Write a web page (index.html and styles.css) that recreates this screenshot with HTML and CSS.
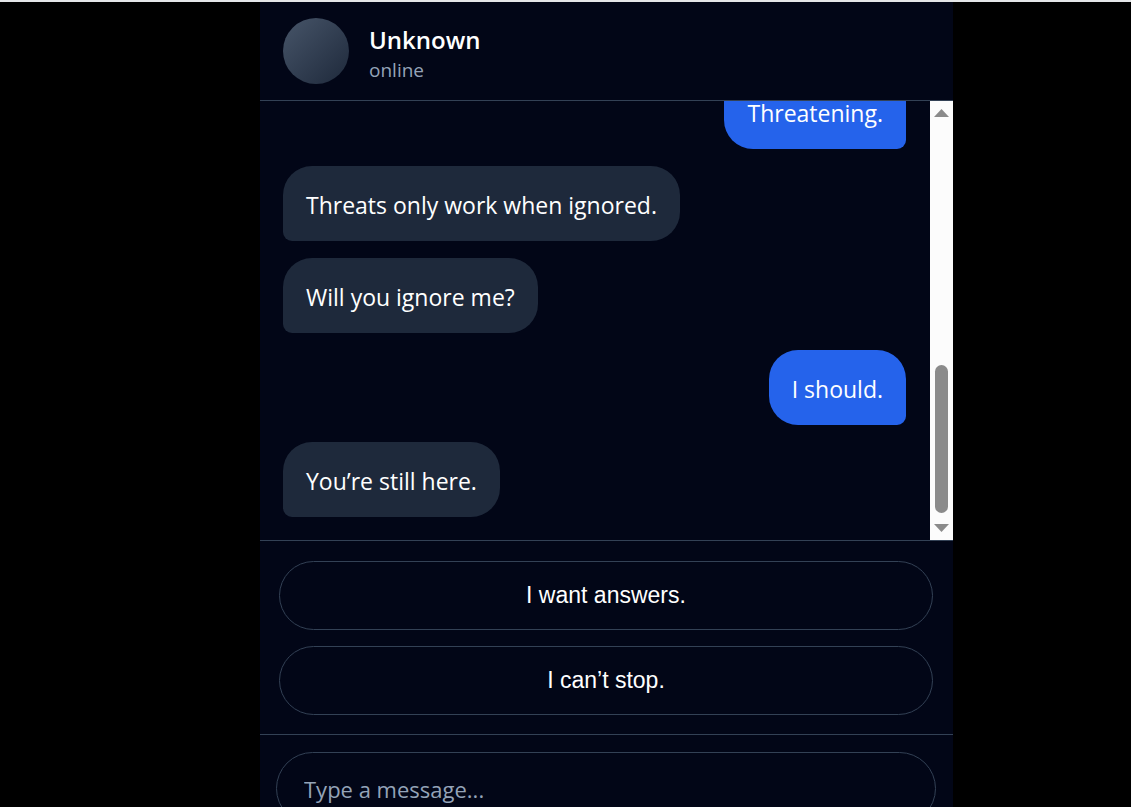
FILE: index.html
```html
<!DOCTYPE html>
<html lang="en">
<head>
<meta charset="utf-8">
<meta name="viewport" content="width=device-width, initial-scale=1">
<title>Unknown</title>
<link rel="stylesheet" href="styles.css">
</head>
<body>
<main class="app">
  <header class="header">
    <div class="avatar"></div>
    <div class="contact">
      <h1 class="name">Unknown</h1>
      <p class="status">online</p>
    </div>
  </header>
  <section class="chat">
    <div class="messages">
      <p class="bubble bubble-me">Threatening.</p>
      <p class="bubble">Threats only work when ignored.</p>
      <p class="bubble">Will you ignore me?</p>
      <p class="bubble bubble-me">I should.</p>
      <p class="bubble">You’re still here.</p>
    </div>
    <div class="scrollbar" aria-hidden="true">
      <svg class="arrow" viewBox="0 0 15 8"><path d="M7.5 0 15 8H0z"/></svg>
      <div class="thumb"></div>
      <svg class="arrow" viewBox="0 0 15 8"><path d="M0 0h15L7.5 8z"/></svg>
    </div>
  </section>
  <div class="choices">
    <button class="choice" type="button">I want answers.</button>
    <button class="choice" type="button">I can’t stop.</button>
  </div>
  <form class="composer">
    <input class="field" type="text" placeholder="Type a message..." aria-label="Type a message">
  </form>
</main>
</body>
</html>
```

FILE: styles.css
```css
* {
  box-sizing: border-box;
}

body {
  margin: 0;
  height: 100vh;
  padding-left: 82px;
  overflow: hidden;
  border-top: 2px solid #e4e6e8;
  background: #000;
  color: #fff;
  font-family: "Segoe UI", "Open Sans", "Noto Sans", sans-serif;
}

.app {
  display: flex;
  flex-direction: column;
  width: 100%;
  max-width: 693px;
  height: calc(100vh + 33px);
  margin: 0 auto;
  background: #020617;
}

.header {
  display: flex;
  flex: none;
  align-items: center;
  gap: 20px;
  padding: 16px 23px;
  border-bottom: 1px solid #334155;
}

.avatar {
  width: 66px;
  height: 66px;
  border-radius: 50%;
  background: linear-gradient(135deg, #475569, #1e293b);
}

.contact {
  padding-top: 6px;
}

.name,
.status {
  margin: 0;
}

.name {
  font-size: 24px;
  font-weight: 600;
  line-height: 32px;
}

.status {
  color: #94a3b8;
  font-size: 19px;
  line-height: 28px;
}

.chat {
  display: flex;
  flex: 1;
  min-height: 0;
}

.messages {
  display: flex;
  flex: 1;
  flex-direction: column;
  justify-content: flex-end;
  align-items: flex-start;
  gap: 17px;
  padding: 0 24px 23px 23px;
  overflow: hidden;
}

.bubble {
  flex: none;
  max-width: 75%;
  margin: 0;
  padding: 22px 23px 18px;
  border-radius: 29px 29px 29px 9px;
  background: #1e293b;
  font-size: 23px;
  line-height: 35px;
}

.bubble-me {
  align-self: flex-end;
  border-radius: 29px 29px 9px 29px;
  background: #2563eb;
}

.scrollbar {
  display: flex;
  flex-direction: column;
  align-items: center;
  width: 23px;
  padding: 8px 0;
  background: #fcfcfc;
}

.arrow {
  width: 15px;
  height: 8px;
  fill: #8b8b8b;
}

.thumb {
  width: 13px;
  height: 35%;
  margin: auto 0 11px;
  border-radius: 7px;
  background: #8b8b8b;
}

.choices {
  display: flex;
  flex: none;
  flex-direction: column;
  gap: 16px;
  padding: 20px 20px 19px 19px;
  border-top: 1px solid #334155;
}

.choice {
  height: 69px;
  padding: 0 20px;
  border: 1px solid #334155;
  border-radius: 35px;
  background: #020617;
  color: #fff;
  font-family: Arial, "Liberation Sans", sans-serif;
  font-size: 23px;
}

.composer {
  flex: none;
  padding: 17px 17px 17px 16px;
  border-top: 1px solid #334155;
}

.field {
  display: block;
  width: 100%;
  height: 73px;
  padding: 0 27px;
  border: 1px solid #334155;
  border-radius: 37px;
  background: #020617;
  color: #fff;
  font-family: inherit;
  font-size: 22px;
}

.field::placeholder {
  color: #94a3b8;
  opacity: 1;
}
```
